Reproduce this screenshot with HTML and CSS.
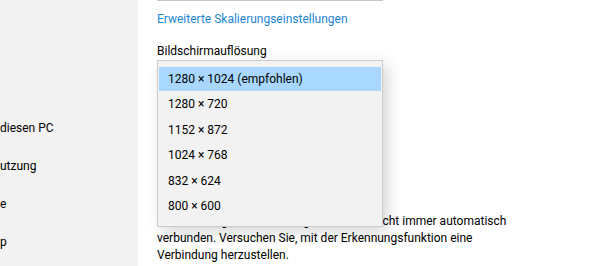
FILE: index.html
```html
<!DOCTYPE html>
<html lang="de">
<head>
<meta charset="utf-8">
<link rel="stylesheet" href="styles.css">
</head>
<body>
<div class="app">
  <nav class="sidebar">
    <div class="nav-item">diesen PC</div>
    <div class="nav-item">utzung</div>
    <div class="nav-item">e</div>
    <div class="nav-item">p</div>
  </nav>
  <main class="content">
    <div class="prev-box"></div>
    <a class="link" href="#">Erweiterte Skalierungseinstellungen</a>
    <div class="label">Bildschirmauflösung</div>
    <div class="combo-wrap">
      <div class="combo"></div>
      <ul class="dropdown">
        <li class="option selected">1280 × 1024 (empfohlen)</li>
        <li class="option">1280 × 720</li>
        <li class="option">1152 × 872</li>
        <li class="option">1024 × 768</li>
        <li class="option">832 × 624</li>
        <li class="option">800 × 600</li>
      </ul>
    </div>
    <p class="para">Ältere Anzeigen werden möglicherweise nicht immer automatisch<br>verbunden. Versuchen Sie, mit der Erkennungsfunktion eine<br>Verbindung herzustellen.</p>
  </main>
</div>
</body>
</html>
```
FILE: styles.css
```css
* { box-sizing: border-box; }
html, body { margin: 0; padding: 0; background: #fff; }
body {
  font-family: Roboto, "Noto Sans", sans-serif;
  font-size: 12px;
  color: #000;
  width: 590px;
  height: 266px;
  overflow: hidden;
}
.app { display: flex; height: 266px; }
.sidebar {
  flex: 0 0 138px;
  width: 138px;
  background: #f2f2f2;
  display: flex;
  flex-direction: column;
  gap: 20px;
  padding-top: 119px;
  overflow: hidden;
}
.nav-item { line-height: 18px; white-space: nowrap; }
.content {
  flex: 1;
  min-width: 0;
  padding-left: 19px;
  display: flex;
  flex-direction: column;
  align-items: flex-start;
}
.prev-box {
  width: 226px;
  height: 1px;
  background: #c8c8c8;
}
.link {
  margin-top: 9px;
  color: #1c86d6;
  text-decoration: none;
  line-height: 18px;
}
.label {
  margin-top: 14px;
  line-height: 18px;
}
.combo-wrap { position: relative; width: 226px; height: 32px; }
.combo { width: 226px; height: 32px; border: 2px solid #999; }
.dropdown {
  position: absolute;
  left: 0;
  top: 0;
  width: 226px;
  margin: 0;
  padding: 6px 1px 6px;
  list-style: none;
  background: #f2f2f2;
  border: 1px solid #cbcbcb;
  box-shadow: 5px 5px 14px rgba(0,0,0,0.16);
  z-index: 2;
}
.option {
  height: 25.6px;
  line-height: 25.6px;
  padding-left: 9px;
  white-space: nowrap;
}
.option.selected { background: #a8d8ff; height: 24px; line-height: 24px; margin-bottom: 1px; }
.para {
  margin: 121px 0 0;
  line-height: 17px;
  white-space: nowrap;
}
```
